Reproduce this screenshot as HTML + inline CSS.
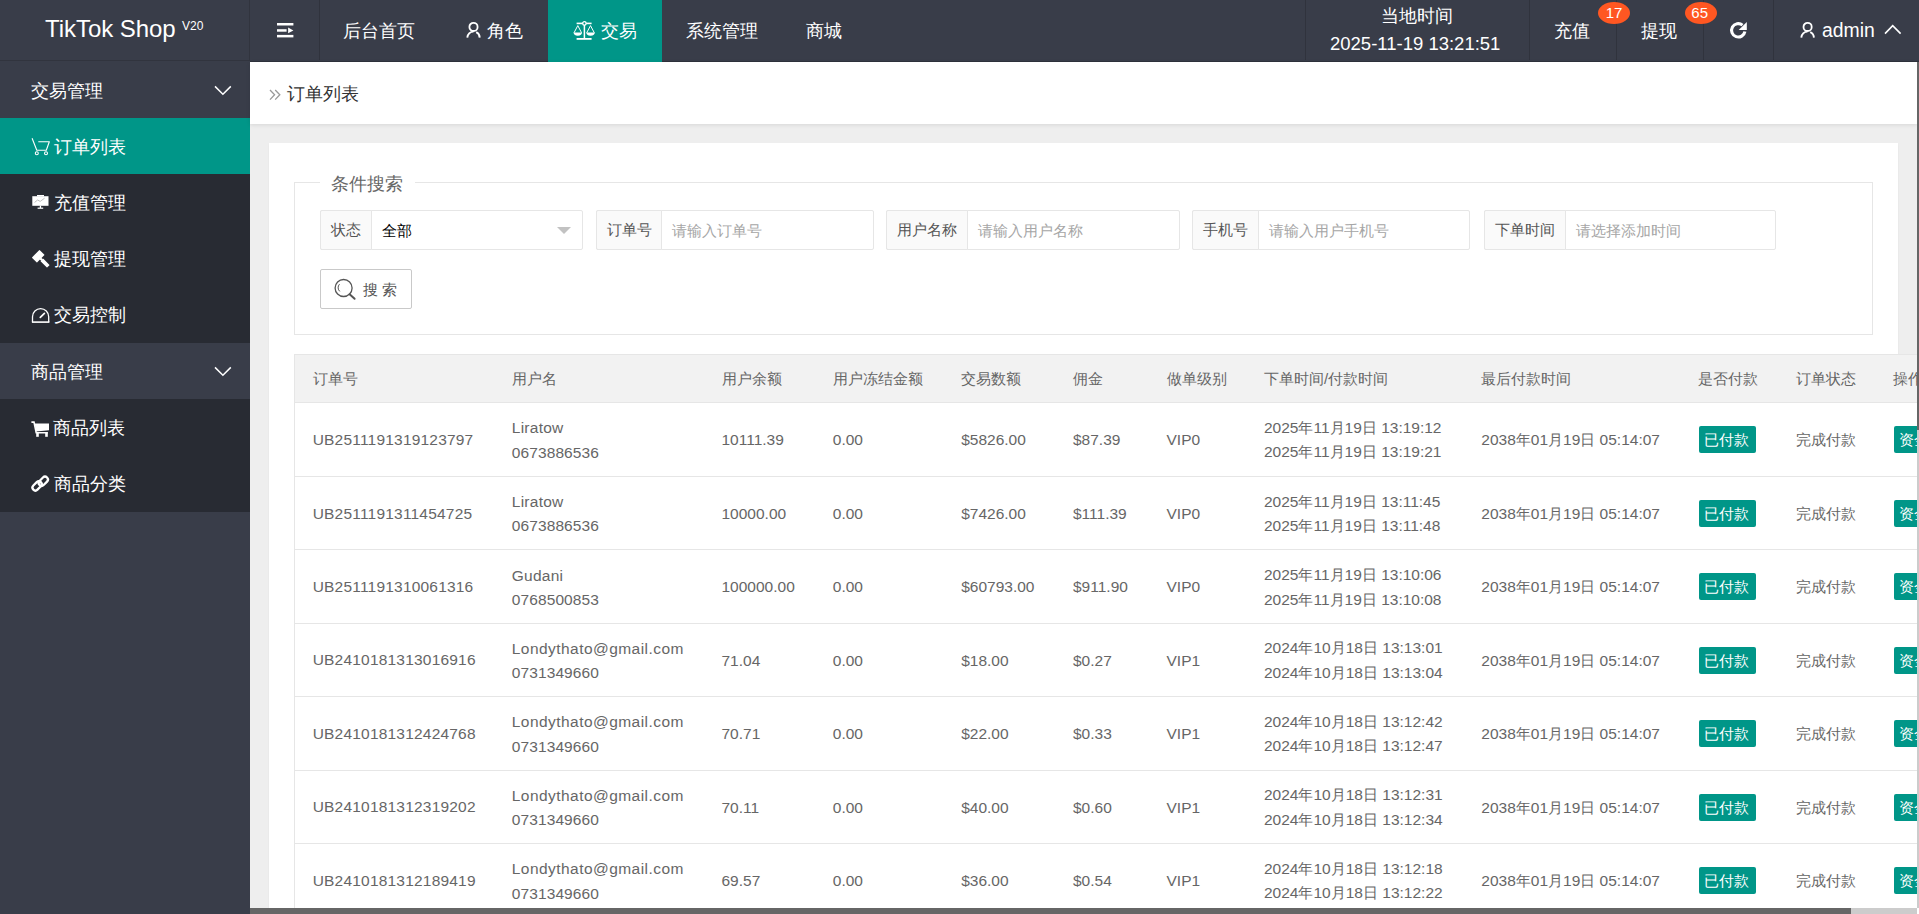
<!DOCTYPE html><html><head><meta charset="utf-8"><title>TikTok Shop</title><style>
*{box-sizing:border-box;margin:0;padding:0}
html,body{width:1919px;height:914px;overflow:hidden;background:#eee;font-family:"Liberation Sans",sans-serif;}
.a{position:absolute}
.t{position:absolute;white-space:nowrap}
svg{position:absolute;overflow:visible}
</style></head><body>
<div class="a" style="left:0px;top:0px;width:1919px;height:62px;background:#393d49;"></div>
<div class="a" style="left:250px;top:61px;width:1669px;height:1px;background:#2f323c;"></div>
<div class="a" style="left:0px;top:60px;width:250px;height:1px;background:#31343e;"></div>
<div class="a" style="left:249px;top:0px;width:1px;height:60px;background:#31343e;"></div>
<div class="t" style="left:45.0px;top:9.0px;font-size:24px;line-height:40px;color:#fff;letter-spacing:-0.05px">TikTok Shop</div>
<div class="t" style="left:182.0px;top:6.0px;font-size:12px;line-height:40px;color:#fff;">V20</div>
<svg style="left:277px;top:23px" width="17" height="15" viewBox="0 0 17 15"><rect x="0" y="0" width="16.4" height="2.5" fill="#fff"/><rect x="0" y="6.2" width="9.6" height="2.5" fill="#fff"/><path d="M11.1 4.6 L16.4 7.45 L11.1 10.3 Z" fill="#fff"/><rect x="0" y="11.9" width="16.4" height="2.5" fill="#fff"/></svg>
<div class="a" style="left:319px;top:0px;width:1px;height:60px;background:#30333d;"></div>
<div class="t" style="left:343.0px;top:11.0px;font-size:18px;line-height:40px;color:#fff;">后台首页</div>
<svg style="left:466px;top:22px" width="16" height="17" viewBox="0 0 16 17"><circle cx="7.5" cy="4.9" r="4.1" fill="none" stroke="#fff" stroke-width="1.8"/><path d="M1.3 15.6 A6.2 6.2 0 0 1 7.5 9.6" fill="none" stroke="#fff" stroke-width="1.9"/><path d="M10.2 10.2 A6.2 6.2 0 0 1 13.7 15.6" fill="none" stroke="#fff" stroke-width="1.9"/></svg>
<div class="t" style="left:487.0px;top:11.0px;font-size:18px;line-height:40px;color:#fff;">角色</div>
<div class="a" style="left:548px;top:0px;width:114px;height:62px;background:#009688;"></div>
<svg style="left:572px;top:20px" width="25" height="21" viewBox="0 0 25 21"><rect x="4.6" y="2.6" width="15" height="1.6" fill="#fff"/><circle cx="12.4" cy="3.4" r="1.7" fill="#009688" stroke="#fff" stroke-width="1.3"/><rect x="11.65" y="5" width="1.5" height="14" fill="#fff"/><rect x="4.6" y="18" width="15" height="1.8" fill="#fff"/><path d="M5.8 5.6 L2 12.8 M5.8 5.6 L9.6 12.8 M18.5 5.6 L14.7 12.8 M18.5 5.6 L22.3 12.8" stroke="#fff" stroke-width="1.0" fill="none"/><path d="M1.6 12.6 H10 A4.2 3.1 0 0 1 1.6 12.6 Z M14.3 12.6 H22.8 A4.25 3.1 0 0 1 14.3 12.6 Z" fill="#fff"/></svg>
<div class="t" style="left:601.0px;top:11.0px;font-size:18px;line-height:40px;color:#fff;">交易</div>
<div class="t" style="left:686.0px;top:11.0px;font-size:18px;line-height:40px;color:#fff;">系统管理</div>
<div class="t" style="left:806.0px;top:11.0px;font-size:18px;line-height:40px;color:#fff;">商城</div>
<div class="a" style="left:1305px;top:0px;width:1px;height:60px;background:#30333d;"></div>
<div class="t" style="left:1381.0px;top:-4.0px;font-size:18px;line-height:40px;color:#fff;">当地时间</div>
<div class="t" style="left:1330.0px;top:24.0px;font-size:18.5px;line-height:40px;color:#fff;">2025-11-19 13:21:51</div>
<div class="a" style="left:1529px;top:0px;width:1px;height:60px;background:#30333d;"></div>
<div class="a" style="left:1616px;top:0px;width:1px;height:60px;background:#30333d;"></div>
<div class="a" style="left:1703px;top:0px;width:1px;height:60px;background:#30333d;"></div>
<div class="t" style="left:1554.0px;top:11.0px;font-size:18px;line-height:40px;color:#fff;">充值</div>
<div class="a" style="left:1598px;top:2px;width:32px;height:22px;border-radius:50%;background:#ff5722"></div>
<div class="t" style="left:1605.7px;top:-7.0px;font-size:15px;line-height:40px;color:#fff;">17</div>
<div class="t" style="left:1641.0px;top:11.0px;font-size:18px;line-height:40px;color:#fff;">提现</div>
<div class="a" style="left:1685px;top:2px;width:32px;height:22px;border-radius:50%;background:#ff5722"></div>
<div class="t" style="left:1691.3px;top:-7.0px;font-size:15px;line-height:40px;color:#fff;">65</div>
<svg style="left:1729px;top:22px" width="19" height="18" viewBox="0 0 19 18"><path d="M13.5 3.1 A6.7 6.7 0 1 0 15.9 9.4" fill="none" stroke="#fff" stroke-width="3.1"/><path d="M17.8 0 L17.8 7.9 L9.7 7.9 Z" fill="#fff"/></svg>
<div class="a" style="left:1773px;top:0px;width:1px;height:60px;background:#30333d;"></div>
<svg style="left:1800px;top:22px" width="16" height="17" viewBox="0 0 16 17"><circle cx="7.6" cy="4.9" r="4.1" fill="none" stroke="#fff" stroke-width="1.8"/><path d="M1.3 15.6 A6.2 6.2 0 0 1 7.5 9.6" fill="none" stroke="#fff" stroke-width="1.9"/><path d="M10.2 10.2 A6.2 6.2 0 0 1 13.9 15.6" fill="none" stroke="#fff" stroke-width="1.9"/></svg>
<div class="t" style="left:1822.0px;top:10.0px;font-size:19.4px;line-height:40px;color:#fff;">admin</div>
<svg style="left:1884px;top:24px" width="18" height="11" viewBox="0 0 18 11"><path d="M1 9.6 L8.7 1.6 L16.6 9.6" fill="none" stroke="#fff" stroke-width="1.6"/></svg>
<div class="a" style="left:0px;top:61px;width:250px;height:853px;background:#393d49;"></div>
<div class="a" style="left:0px;top:118px;width:250px;height:56px;background:#009688;"></div>
<div class="a" style="left:0px;top:174px;width:250px;height:169px;background:#282b33;"></div>
<div class="a" style="left:0px;top:399px;width:250px;height:113px;background:#282b33;"></div>
<div class="t" style="left:30.5px;top:71.0px;font-size:18px;line-height:40px;color:#fff;">交易管理</div>
<svg style="left:214px;top:85px" width="18" height="11" viewBox="0 0 18 11"><path d="M1 1.4 L8.9 9.2 L16.8 1.4" fill="none" stroke="#fff" stroke-width="1.5"/></svg>
<div class="t" style="left:30.5px;top:352.0px;font-size:18px;line-height:40px;color:#fff;">商品管理</div>
<svg style="left:214px;top:366px" width="18" height="11" viewBox="0 0 18 11"><path d="M1 1.4 L8.9 9.2 L16.8 1.4" fill="none" stroke="#fff" stroke-width="1.5"/></svg>
<svg style="left:31px;top:138px" width="20" height="18" viewBox="0 0 20 18"><path d="M1.1 0.2 L5.8 12.2 H15.3 L18.3 3.8 H7.3" fill="none" stroke="#fff" stroke-width="1.1" stroke-linejoin="round"/><circle cx="5.8" cy="15.2" r="1.5" fill="none" stroke="#fff" stroke-width="1.1"/><circle cx="15" cy="15.2" r="1.5" fill="none" stroke="#fff" stroke-width="1.1"/></svg>
<div class="t" style="left:54.0px;top:127.0px;font-size:18px;line-height:40px;color:#fff;">订单列表</div>
<svg style="left:32px;top:195px" width="17" height="14" viewBox="0 0 17 14"><rect x="5" y="0" width="7" height="1.5" fill="#fff"/><rect x="0.3" y="1.2" width="16.2" height="9.6" fill="#fff"/><path d="M2.6 7.4 L5.6 5 L8.2 6.4 L12.6 3.2" stroke="#b8b8b8" stroke-width="0.9" fill="none"/><rect x="7.8" y="10.6" width="1.3" height="2.4" fill="#fff"/><rect x="5.6" y="12.6" width="5.6" height="1.2" fill="#fff"/></svg>
<div class="t" style="left:54.0px;top:183.0px;font-size:18px;line-height:40px;color:#fff;">充值管理</div>
<svg style="left:31px;top:249px" width="20" height="20" viewBox="0 0 20 20"><g transform="translate(7.2 7.25) rotate(-45)" fill="#fff"><rect x="-5.4" y="-3.6" width="10.8" height="7.2" rx="0.5"/><rect x="-1.1" y="3" width="2.2" height="2.4"/><rect x="-1.85" y="5" width="3.7" height="9.3" rx="0.5"/></g></svg>
<div class="t" style="left:54.0px;top:239.0px;font-size:18px;line-height:40px;color:#fff;">提现管理</div>
<svg style="left:31px;top:307px" width="20" height="17" viewBox="0 0 20 17"><path d="M1.5 15 V9.8 A8.1 8.1 0 0 1 17.7 9.8 V15" fill="none" stroke="#fff" stroke-width="1.3"/><rect x="0.9" y="14.3" width="17.5" height="1.6" fill="#fff"/><path d="M9.3 10.4 L13.4 6.4" stroke="#fff" stroke-width="1.7" stroke-linecap="round"/></svg>
<div class="t" style="left:54.0px;top:295.0px;font-size:18px;line-height:40px;color:#fff;">交易控制</div>
<svg style="left:31px;top:421px" width="19" height="17" viewBox="0 0 19 17"><path d="M0.4 1.1 H3 L5.2 11.8 H16.8" fill="none" stroke="#fff" stroke-width="1.6"/><path d="M3.6 2.6 H18 V9.2 L5 10.6 Z" fill="#fff"/><rect x="5.2" y="11.2" width="2.6" height="4.6" fill="#fff"/><rect x="14.2" y="11.2" width="2.6" height="4.6" fill="#fff"/></svg>
<div class="t" style="left:53.3px;top:408.0px;font-size:18px;line-height:40px;color:#fff;">商品列表</div>
<svg style="left:30px;top:474px" width="21" height="20" viewBox="0 0 21 20"><g fill="none" stroke="#fff" stroke-width="2.3"><rect x="1.8" y="9" width="10.6" height="5.8" rx="2.9" transform="rotate(-45 7.1 11.9)"/><rect x="8" y="4.4" width="10.6" height="5.8" rx="2.9" transform="rotate(-45 13.3 7.3)"/></g></svg>
<div class="t" style="left:54.0px;top:464.0px;font-size:18px;line-height:40px;color:#fff;">商品分类</div>
<div class="a" style="left:250px;top:62px;width:1667px;height:62px;background:#fff;box-shadow:0 1px 4px rgba(0,0,0,.10)"></div>
<svg style="left:269px;top:89px" width="13" height="12" viewBox="0 0 13 12"><path d="M1 1 L5.6 5.8 L1 10.6 M6.2 1 L10.8 5.8 L6.2 10.6" fill="none" stroke="#999" stroke-width="1.3"/></svg>
<div class="t" style="left:286.5px;top:74.0px;font-size:18px;line-height:40px;color:#333;">订单列表</div>
<div class="a" style="left:269px;top:143px;width:1629px;height:771px;background:#fff;box-shadow:0 1px 2px rgba(0,0,0,.05)"></div>
<div class="a" style="left:294px;top:182px;width:1579px;height:153px;border:1px solid #e6e6e6"></div>
<div class="a" style="left:320px;top:178px;width:95px;height:8px;background:#fff;"></div>
<div class="t" style="left:331.3px;top:164.0px;font-size:18px;line-height:40px;color:#666;">条件搜索</div>
<div class="a" style="left:320px;top:210px;width:263px;height:40px;border:1px solid #e6e6e6;border-radius:2px;background:#fff"></div>
<div class="a" style="left:320px;top:210px;width:52px;height:40px;border:1px solid #e6e6e6;border-radius:2px 0 0 2px;background:#fafafa"></div>
<div class="t" style="left:331.2px;top:210.0px;font-size:15px;line-height:40px;color:#555;">状态</div>
<div class="t" style="left:382.3px;top:211.0px;font-size:15px;line-height:40px;color:#000;">全部</div>
<svg style="left:557px;top:227px" width="14" height="7" viewBox="0 0 14 7"><path d="M0 0 H14 L7 7 Z" fill="#c2c2c2"/></svg>
<div class="a" style="left:596px;top:210px;width:278px;height:40px;border:1px solid #e6e6e6;border-radius:2px;background:#fff"></div>
<div class="a" style="left:596px;top:210px;width:66px;height:40px;border:1px solid #e6e6e6;border-radius:2px 0 0 2px;background:#fafafa"></div>
<div class="t" style="left:607.2px;top:210.0px;font-size:15px;line-height:40px;color:#555;">订单号</div>
<div class="t" style="left:672.0px;top:211.0px;font-size:15px;line-height:40px;color:#a6a6a6;">请输入订单号</div>
<div class="a" style="left:886px;top:210px;width:294px;height:40px;border:1px solid #e6e6e6;border-radius:2px;background:#fff"></div>
<div class="a" style="left:886px;top:210px;width:82px;height:40px;border:1px solid #e6e6e6;border-radius:2px 0 0 2px;background:#fafafa"></div>
<div class="t" style="left:897.2px;top:210.0px;font-size:15px;line-height:40px;color:#555;">用户名称</div>
<div class="t" style="left:978.0px;top:211.0px;font-size:15px;line-height:40px;color:#a6a6a6;">请输入用户名称</div>
<div class="a" style="left:1192px;top:210px;width:278px;height:40px;border:1px solid #e6e6e6;border-radius:2px;background:#fff"></div>
<div class="a" style="left:1192px;top:210px;width:67px;height:40px;border:1px solid #e6e6e6;border-radius:2px 0 0 2px;background:#fafafa"></div>
<div class="t" style="left:1203.2px;top:210.0px;font-size:15px;line-height:40px;color:#555;">手机号</div>
<div class="t" style="left:1269.0px;top:211.0px;font-size:15px;line-height:40px;color:#a6a6a6;">请输入用户手机号</div>
<div class="a" style="left:1484px;top:210px;width:292px;height:40px;border:1px solid #e6e6e6;border-radius:2px;background:#fff"></div>
<div class="a" style="left:1484px;top:210px;width:82px;height:40px;border:1px solid #e6e6e6;border-radius:2px 0 0 2px;background:#fafafa"></div>
<div class="t" style="left:1495.2px;top:210.0px;font-size:15px;line-height:40px;color:#555;">下单时间</div>
<div class="t" style="left:1576.0px;top:211.0px;font-size:15px;line-height:40px;color:#a6a6a6;">请选择添加时间</div>
<div class="a" style="left:320px;top:269px;width:92px;height:40px;border:1px solid #c9c9c9;border-radius:2px;background:#fff"></div>
<svg style="left:334px;top:278px" width="23" height="22" viewBox="0 0 23 22"><circle cx="9.6" cy="10" r="8.5" fill="none" stroke="#555" stroke-width="1.3"/><path d="M5.5 6.2 A5 5 0 0 0 5.8 13.4" fill="none" stroke="#555" stroke-width="1"/><path d="M15.6 16.2 L20.6 20.8" stroke="#555" stroke-width="2" stroke-linecap="round"/></svg>
<div class="t" style="left:363.2px;top:270.0px;font-size:15px;line-height:40px;color:#555;">搜 索</div>
<div class="a" style="left:294px;top:354px;width:1700px;height:560px;border-left:1px solid #e6e6e6;border-top:1px solid #e6e6e6;background:#fff"></div>
<div class="a" style="left:295px;top:355px;width:1700px;height:47px;background:#f2f2f2;"></div>
<div class="a" style="left:294px;top:402px;width:1700px;height:1px;background:#e6e6e6;"></div>
<div class="a" style="left:294px;top:476px;width:1700px;height:1px;background:#e6e6e6;"></div>
<div class="a" style="left:294px;top:549px;width:1700px;height:1px;background:#e6e6e6;"></div>
<div class="a" style="left:294px;top:623px;width:1700px;height:1px;background:#e6e6e6;"></div>
<div class="a" style="left:294px;top:696px;width:1700px;height:1px;background:#e6e6e6;"></div>
<div class="a" style="left:294px;top:770px;width:1700px;height:1px;background:#e6e6e6;"></div>
<div class="a" style="left:294px;top:843px;width:1700px;height:1px;background:#e6e6e6;"></div>
<div class="t" style="left:312.7px;top:359.0px;font-size:15px;line-height:40px;color:#666;">订单号</div>
<div class="t" style="left:511.8px;top:359.0px;font-size:15px;line-height:40px;color:#666;">用户名</div>
<div class="t" style="left:721.5px;top:359.0px;font-size:15px;line-height:40px;color:#666;">用户余额</div>
<div class="t" style="left:832.8px;top:359.0px;font-size:15px;line-height:40px;color:#666;">用户冻结金额</div>
<div class="t" style="left:961.2px;top:359.0px;font-size:15px;line-height:40px;color:#666;">交易数额</div>
<div class="t" style="left:1073.0px;top:359.0px;font-size:15px;line-height:40px;color:#666;">佣金</div>
<div class="t" style="left:1166.5px;top:359.0px;font-size:15px;line-height:40px;color:#666;">做单级别</div>
<div class="t" style="left:1264.0px;top:359.0px;font-size:15px;line-height:40px;color:#666;">下单时间/付款时间</div>
<div class="t" style="left:1481.3px;top:359.0px;font-size:15px;line-height:40px;color:#666;">最后付款时间</div>
<div class="t" style="left:1697.9px;top:359.0px;font-size:15px;line-height:40px;color:#666;">是否付款</div>
<div class="t" style="left:1796.4px;top:359.0px;font-size:15px;line-height:40px;color:#666;">订单状态</div>
<div class="t" style="left:1892.6px;top:359.0px;font-size:15px;line-height:40px;color:#666;">操作</div>
<div class="t" style="left:312.7px;top:420.0px;font-size:15.5px;line-height:40px;color:#666;letter-spacing:0.2px">UB2511191319123797</div>
<div class="t" style="left:511.8px;top:408.0px;font-size:15.5px;line-height:40px;color:#666;letter-spacing:0.25px">Liratow</div>
<div class="t" style="left:511.8px;top:433.0px;font-size:15.5px;line-height:40px;color:#666;letter-spacing:0.1px">0673886536</div>
<div class="t" style="left:721.5px;top:420.0px;font-size:15.5px;line-height:40px;color:#666;">10111.39</div>
<div class="t" style="left:832.8px;top:420.0px;font-size:15.5px;line-height:40px;color:#666;">0.00</div>
<div class="t" style="left:961.2px;top:420.0px;font-size:15.5px;line-height:40px;color:#666;">$5826.00</div>
<div class="t" style="left:1073.0px;top:420.0px;font-size:15.5px;line-height:40px;color:#666;">$87.39</div>
<div class="t" style="left:1166.5px;top:420.0px;font-size:15.5px;line-height:40px;color:#666;">VIP0</div>
<div class="t" style="left:1264.0px;top:408.0px;font-size:15.5px;line-height:40px;color:#666;">2025<span style="font-size:15px">年</span>11<span style="font-size:15px">月</span>19<span style="font-size:15px">日</span> 13:19:12</div>
<div class="t" style="left:1264.0px;top:432.0px;font-size:15.5px;line-height:40px;color:#666;">2025<span style="font-size:15px">年</span>11<span style="font-size:15px">月</span>19<span style="font-size:15px">日</span> 13:19:21</div>
<div class="t" style="left:1481.3px;top:420.0px;font-size:15.5px;line-height:40px;color:#666;">2038<span style="font-size:15px">年</span>01<span style="font-size:15px">月</span>19<span style="font-size:15px">日</span> 05:14:07</div>
<div class="a" style="left:1699px;top:426px;width:57px;height:27px;border-radius:2px;background:#009688"></div>
<div class="t" style="left:1704.0px;top:420.0px;font-size:15px;line-height:40px;color:#fff;">已付款</div>
<div class="t" style="left:1796.4px;top:420.0px;font-size:15px;line-height:40px;color:#666;">完成付款</div>
<div class="a" style="left:1894px;top:426px;width:40px;height:27px;border-radius:2px;background:#009688"></div>
<div class="t" style="left:1899.0px;top:420.0px;font-size:15px;line-height:40px;color:#fff;">资金</div>
<div class="t" style="left:312.7px;top:494.0px;font-size:15.5px;line-height:40px;color:#666;letter-spacing:0.2px">UB2511191311454725</div>
<div class="t" style="left:511.8px;top:482.0px;font-size:15.5px;line-height:40px;color:#666;letter-spacing:0.25px">Liratow</div>
<div class="t" style="left:511.8px;top:506.0px;font-size:15.5px;line-height:40px;color:#666;letter-spacing:0.1px">0673886536</div>
<div class="t" style="left:721.5px;top:494.0px;font-size:15.5px;line-height:40px;color:#666;">10000.00</div>
<div class="t" style="left:832.8px;top:494.0px;font-size:15.5px;line-height:40px;color:#666;">0.00</div>
<div class="t" style="left:961.2px;top:494.0px;font-size:15.5px;line-height:40px;color:#666;">$7426.00</div>
<div class="t" style="left:1073.0px;top:494.0px;font-size:15.5px;line-height:40px;color:#666;">$111.39</div>
<div class="t" style="left:1166.5px;top:494.0px;font-size:15.5px;line-height:40px;color:#666;">VIP0</div>
<div class="t" style="left:1264.0px;top:482.0px;font-size:15.5px;line-height:40px;color:#666;">2025<span style="font-size:15px">年</span>11<span style="font-size:15px">月</span>19<span style="font-size:15px">日</span> 13:11:45</div>
<div class="t" style="left:1264.0px;top:506.0px;font-size:15.5px;line-height:40px;color:#666;">2025<span style="font-size:15px">年</span>11<span style="font-size:15px">月</span>19<span style="font-size:15px">日</span> 13:11:48</div>
<div class="t" style="left:1481.3px;top:494.0px;font-size:15.5px;line-height:40px;color:#666;">2038<span style="font-size:15px">年</span>01<span style="font-size:15px">月</span>19<span style="font-size:15px">日</span> 05:14:07</div>
<div class="a" style="left:1699px;top:500px;width:57px;height:27px;border-radius:2px;background:#009688"></div>
<div class="t" style="left:1704.0px;top:494.0px;font-size:15px;line-height:40px;color:#fff;">已付款</div>
<div class="t" style="left:1796.4px;top:494.0px;font-size:15px;line-height:40px;color:#666;">完成付款</div>
<div class="a" style="left:1894px;top:500px;width:40px;height:27px;border-radius:2px;background:#009688"></div>
<div class="t" style="left:1899.0px;top:494.0px;font-size:15px;line-height:40px;color:#fff;">资金</div>
<div class="t" style="left:312.7px;top:567.0px;font-size:15.5px;line-height:40px;color:#666;letter-spacing:0.2px">UB2511191310061316</div>
<div class="t" style="left:511.8px;top:556.0px;font-size:15.5px;line-height:40px;color:#666;letter-spacing:0.25px">Gudani</div>
<div class="t" style="left:511.8px;top:580.0px;font-size:15.5px;line-height:40px;color:#666;letter-spacing:0.1px">0768500853</div>
<div class="t" style="left:721.5px;top:567.0px;font-size:15.5px;line-height:40px;color:#666;">100000.00</div>
<div class="t" style="left:832.8px;top:567.0px;font-size:15.5px;line-height:40px;color:#666;">0.00</div>
<div class="t" style="left:961.2px;top:567.0px;font-size:15.5px;line-height:40px;color:#666;">$60793.00</div>
<div class="t" style="left:1073.0px;top:567.0px;font-size:15.5px;line-height:40px;color:#666;">$911.90</div>
<div class="t" style="left:1166.5px;top:567.0px;font-size:15.5px;line-height:40px;color:#666;">VIP0</div>
<div class="t" style="left:1264.0px;top:555.0px;font-size:15.5px;line-height:40px;color:#666;">2025<span style="font-size:15px">年</span>11<span style="font-size:15px">月</span>19<span style="font-size:15px">日</span> 13:10:06</div>
<div class="t" style="left:1264.0px;top:580.0px;font-size:15.5px;line-height:40px;color:#666;">2025<span style="font-size:15px">年</span>11<span style="font-size:15px">月</span>19<span style="font-size:15px">日</span> 13:10:08</div>
<div class="t" style="left:1481.3px;top:567.0px;font-size:15.5px;line-height:40px;color:#666;">2038<span style="font-size:15px">年</span>01<span style="font-size:15px">月</span>19<span style="font-size:15px">日</span> 05:14:07</div>
<div class="a" style="left:1699px;top:573px;width:57px;height:27px;border-radius:2px;background:#009688"></div>
<div class="t" style="left:1704.0px;top:567.0px;font-size:15px;line-height:40px;color:#fff;">已付款</div>
<div class="t" style="left:1796.4px;top:567.0px;font-size:15px;line-height:40px;color:#666;">完成付款</div>
<div class="a" style="left:1894px;top:573px;width:40px;height:27px;border-radius:2px;background:#009688"></div>
<div class="t" style="left:1899.0px;top:567.0px;font-size:15px;line-height:40px;color:#fff;">资金</div>
<div class="t" style="left:312.7px;top:640.0px;font-size:15.5px;line-height:40px;color:#666;letter-spacing:0.2px">UB2410181313016916</div>
<div class="t" style="left:511.8px;top:629.0px;font-size:15.5px;line-height:40px;color:#666;letter-spacing:0.45px">Londythato@gmail.com</div>
<div class="t" style="left:511.8px;top:653.0px;font-size:15.5px;line-height:40px;color:#666;letter-spacing:0.1px">0731349660</div>
<div class="t" style="left:721.5px;top:641.0px;font-size:15.5px;line-height:40px;color:#666;">71.04</div>
<div class="t" style="left:832.8px;top:641.0px;font-size:15.5px;line-height:40px;color:#666;">0.00</div>
<div class="t" style="left:961.2px;top:641.0px;font-size:15.5px;line-height:40px;color:#666;">$18.00</div>
<div class="t" style="left:1073.0px;top:641.0px;font-size:15.5px;line-height:40px;color:#666;">$0.27</div>
<div class="t" style="left:1166.5px;top:641.0px;font-size:15.5px;line-height:40px;color:#666;">VIP1</div>
<div class="t" style="left:1264.0px;top:628.0px;font-size:15.5px;line-height:40px;color:#666;">2024<span style="font-size:15px">年</span>10<span style="font-size:15px">月</span>18<span style="font-size:15px">日</span> 13:13:01</div>
<div class="t" style="left:1264.0px;top:653.0px;font-size:15.5px;line-height:40px;color:#666;">2024<span style="font-size:15px">年</span>10<span style="font-size:15px">月</span>18<span style="font-size:15px">日</span> 13:13:04</div>
<div class="t" style="left:1481.3px;top:641.0px;font-size:15.5px;line-height:40px;color:#666;">2038<span style="font-size:15px">年</span>01<span style="font-size:15px">月</span>19<span style="font-size:15px">日</span> 05:14:07</div>
<div class="a" style="left:1699px;top:647px;width:57px;height:27px;border-radius:2px;background:#009688"></div>
<div class="t" style="left:1704.0px;top:641.0px;font-size:15px;line-height:40px;color:#fff;">已付款</div>
<div class="t" style="left:1796.4px;top:641.0px;font-size:15px;line-height:40px;color:#666;">完成付款</div>
<div class="a" style="left:1894px;top:647px;width:40px;height:27px;border-radius:2px;background:#009688"></div>
<div class="t" style="left:1899.0px;top:641.0px;font-size:15px;line-height:40px;color:#fff;">资金</div>
<div class="t" style="left:312.7px;top:714.0px;font-size:15.5px;line-height:40px;color:#666;letter-spacing:0.2px">UB2410181312424768</div>
<div class="t" style="left:511.8px;top:702.0px;font-size:15.5px;line-height:40px;color:#666;letter-spacing:0.45px">Londythato@gmail.com</div>
<div class="t" style="left:511.8px;top:727.0px;font-size:15.5px;line-height:40px;color:#666;letter-spacing:0.1px">0731349660</div>
<div class="t" style="left:721.5px;top:714.0px;font-size:15.5px;line-height:40px;color:#666;">70.71</div>
<div class="t" style="left:832.8px;top:714.0px;font-size:15.5px;line-height:40px;color:#666;">0.00</div>
<div class="t" style="left:961.2px;top:714.0px;font-size:15.5px;line-height:40px;color:#666;">$22.00</div>
<div class="t" style="left:1073.0px;top:714.0px;font-size:15.5px;line-height:40px;color:#666;">$0.33</div>
<div class="t" style="left:1166.5px;top:714.0px;font-size:15.5px;line-height:40px;color:#666;">VIP1</div>
<div class="t" style="left:1264.0px;top:702.0px;font-size:15.5px;line-height:40px;color:#666;">2024<span style="font-size:15px">年</span>10<span style="font-size:15px">月</span>18<span style="font-size:15px">日</span> 13:12:42</div>
<div class="t" style="left:1264.0px;top:726.0px;font-size:15.5px;line-height:40px;color:#666;">2024<span style="font-size:15px">年</span>10<span style="font-size:15px">月</span>18<span style="font-size:15px">日</span> 13:12:47</div>
<div class="t" style="left:1481.3px;top:714.0px;font-size:15.5px;line-height:40px;color:#666;">2038<span style="font-size:15px">年</span>01<span style="font-size:15px">月</span>19<span style="font-size:15px">日</span> 05:14:07</div>
<div class="a" style="left:1699px;top:720px;width:57px;height:27px;border-radius:2px;background:#009688"></div>
<div class="t" style="left:1704.0px;top:714.0px;font-size:15px;line-height:40px;color:#fff;">已付款</div>
<div class="t" style="left:1796.4px;top:714.0px;font-size:15px;line-height:40px;color:#666;">完成付款</div>
<div class="a" style="left:1894px;top:720px;width:40px;height:27px;border-radius:2px;background:#009688"></div>
<div class="t" style="left:1899.0px;top:714.0px;font-size:15px;line-height:40px;color:#fff;">资金</div>
<div class="t" style="left:312.7px;top:787.0px;font-size:15.5px;line-height:40px;color:#666;letter-spacing:0.2px">UB2410181312319202</div>
<div class="t" style="left:511.8px;top:776.0px;font-size:15.5px;line-height:40px;color:#666;letter-spacing:0.45px">Londythato@gmail.com</div>
<div class="t" style="left:511.8px;top:800.0px;font-size:15.5px;line-height:40px;color:#666;letter-spacing:0.1px">0731349660</div>
<div class="t" style="left:721.5px;top:788.0px;font-size:15.5px;line-height:40px;color:#666;">70.11</div>
<div class="t" style="left:832.8px;top:788.0px;font-size:15.5px;line-height:40px;color:#666;">0.00</div>
<div class="t" style="left:961.2px;top:788.0px;font-size:15.5px;line-height:40px;color:#666;">$40.00</div>
<div class="t" style="left:1073.0px;top:788.0px;font-size:15.5px;line-height:40px;color:#666;">$0.60</div>
<div class="t" style="left:1166.5px;top:788.0px;font-size:15.5px;line-height:40px;color:#666;">VIP1</div>
<div class="t" style="left:1264.0px;top:775.0px;font-size:15.5px;line-height:40px;color:#666;">2024<span style="font-size:15px">年</span>10<span style="font-size:15px">月</span>18<span style="font-size:15px">日</span> 13:12:31</div>
<div class="t" style="left:1264.0px;top:800.0px;font-size:15.5px;line-height:40px;color:#666;">2024<span style="font-size:15px">年</span>10<span style="font-size:15px">月</span>18<span style="font-size:15px">日</span> 13:12:34</div>
<div class="t" style="left:1481.3px;top:788.0px;font-size:15.5px;line-height:40px;color:#666;">2038<span style="font-size:15px">年</span>01<span style="font-size:15px">月</span>19<span style="font-size:15px">日</span> 05:14:07</div>
<div class="a" style="left:1699px;top:794px;width:57px;height:27px;border-radius:2px;background:#009688"></div>
<div class="t" style="left:1704.0px;top:788.0px;font-size:15px;line-height:40px;color:#fff;">已付款</div>
<div class="t" style="left:1796.4px;top:788.0px;font-size:15px;line-height:40px;color:#666;">完成付款</div>
<div class="a" style="left:1894px;top:794px;width:40px;height:27px;border-radius:2px;background:#009688"></div>
<div class="t" style="left:1899.0px;top:788.0px;font-size:15px;line-height:40px;color:#fff;">资金</div>
<div class="t" style="left:312.7px;top:861.0px;font-size:15.5px;line-height:40px;color:#666;letter-spacing:0.2px">UB2410181312189419</div>
<div class="t" style="left:511.8px;top:849.0px;font-size:15.5px;line-height:40px;color:#666;letter-spacing:0.45px">Londythato@gmail.com</div>
<div class="t" style="left:511.8px;top:874.0px;font-size:15.5px;line-height:40px;color:#666;letter-spacing:0.1px">0731349660</div>
<div class="t" style="left:721.5px;top:861.0px;font-size:15.5px;line-height:40px;color:#666;">69.57</div>
<div class="t" style="left:832.8px;top:861.0px;font-size:15.5px;line-height:40px;color:#666;">0.00</div>
<div class="t" style="left:961.2px;top:861.0px;font-size:15.5px;line-height:40px;color:#666;">$36.00</div>
<div class="t" style="left:1073.0px;top:861.0px;font-size:15.5px;line-height:40px;color:#666;">$0.54</div>
<div class="t" style="left:1166.5px;top:861.0px;font-size:15.5px;line-height:40px;color:#666;">VIP1</div>
<div class="t" style="left:1264.0px;top:849.0px;font-size:15.5px;line-height:40px;color:#666;">2024<span style="font-size:15px">年</span>10<span style="font-size:15px">月</span>18<span style="font-size:15px">日</span> 13:12:18</div>
<div class="t" style="left:1264.0px;top:873.0px;font-size:15.5px;line-height:40px;color:#666;">2024<span style="font-size:15px">年</span>10<span style="font-size:15px">月</span>18<span style="font-size:15px">日</span> 13:12:22</div>
<div class="t" style="left:1481.3px;top:861.0px;font-size:15.5px;line-height:40px;color:#666;">2038<span style="font-size:15px">年</span>01<span style="font-size:15px">月</span>19<span style="font-size:15px">日</span> 05:14:07</div>
<div class="a" style="left:1699px;top:867px;width:57px;height:27px;border-radius:2px;background:#009688"></div>
<div class="t" style="left:1704.0px;top:861.0px;font-size:15px;line-height:40px;color:#fff;">已付款</div>
<div class="t" style="left:1796.4px;top:861.0px;font-size:15px;line-height:40px;color:#666;">完成付款</div>
<div class="a" style="left:1894px;top:867px;width:40px;height:27px;border-radius:2px;background:#009688"></div>
<div class="t" style="left:1899.0px;top:861.0px;font-size:15px;line-height:40px;color:#fff;">资金</div>
<div class="a" style="left:1917px;top:62px;width:2px;height:846px;background:#cccccc;"></div>
<div class="a" style="left:1917px;top:62px;width:2px;height:368px;background:#666666;"></div>
<div class="a" style="left:250px;top:908px;width:1667px;height:6px;background:#cccccc;"></div>
<div class="a" style="left:250px;top:908px;width:1601px;height:6px;background:#666666;"></div>
<div class="a" style="left:1917px;top:908px;width:2px;height:6px;background:#ffffff;"></div>
</body></html>
